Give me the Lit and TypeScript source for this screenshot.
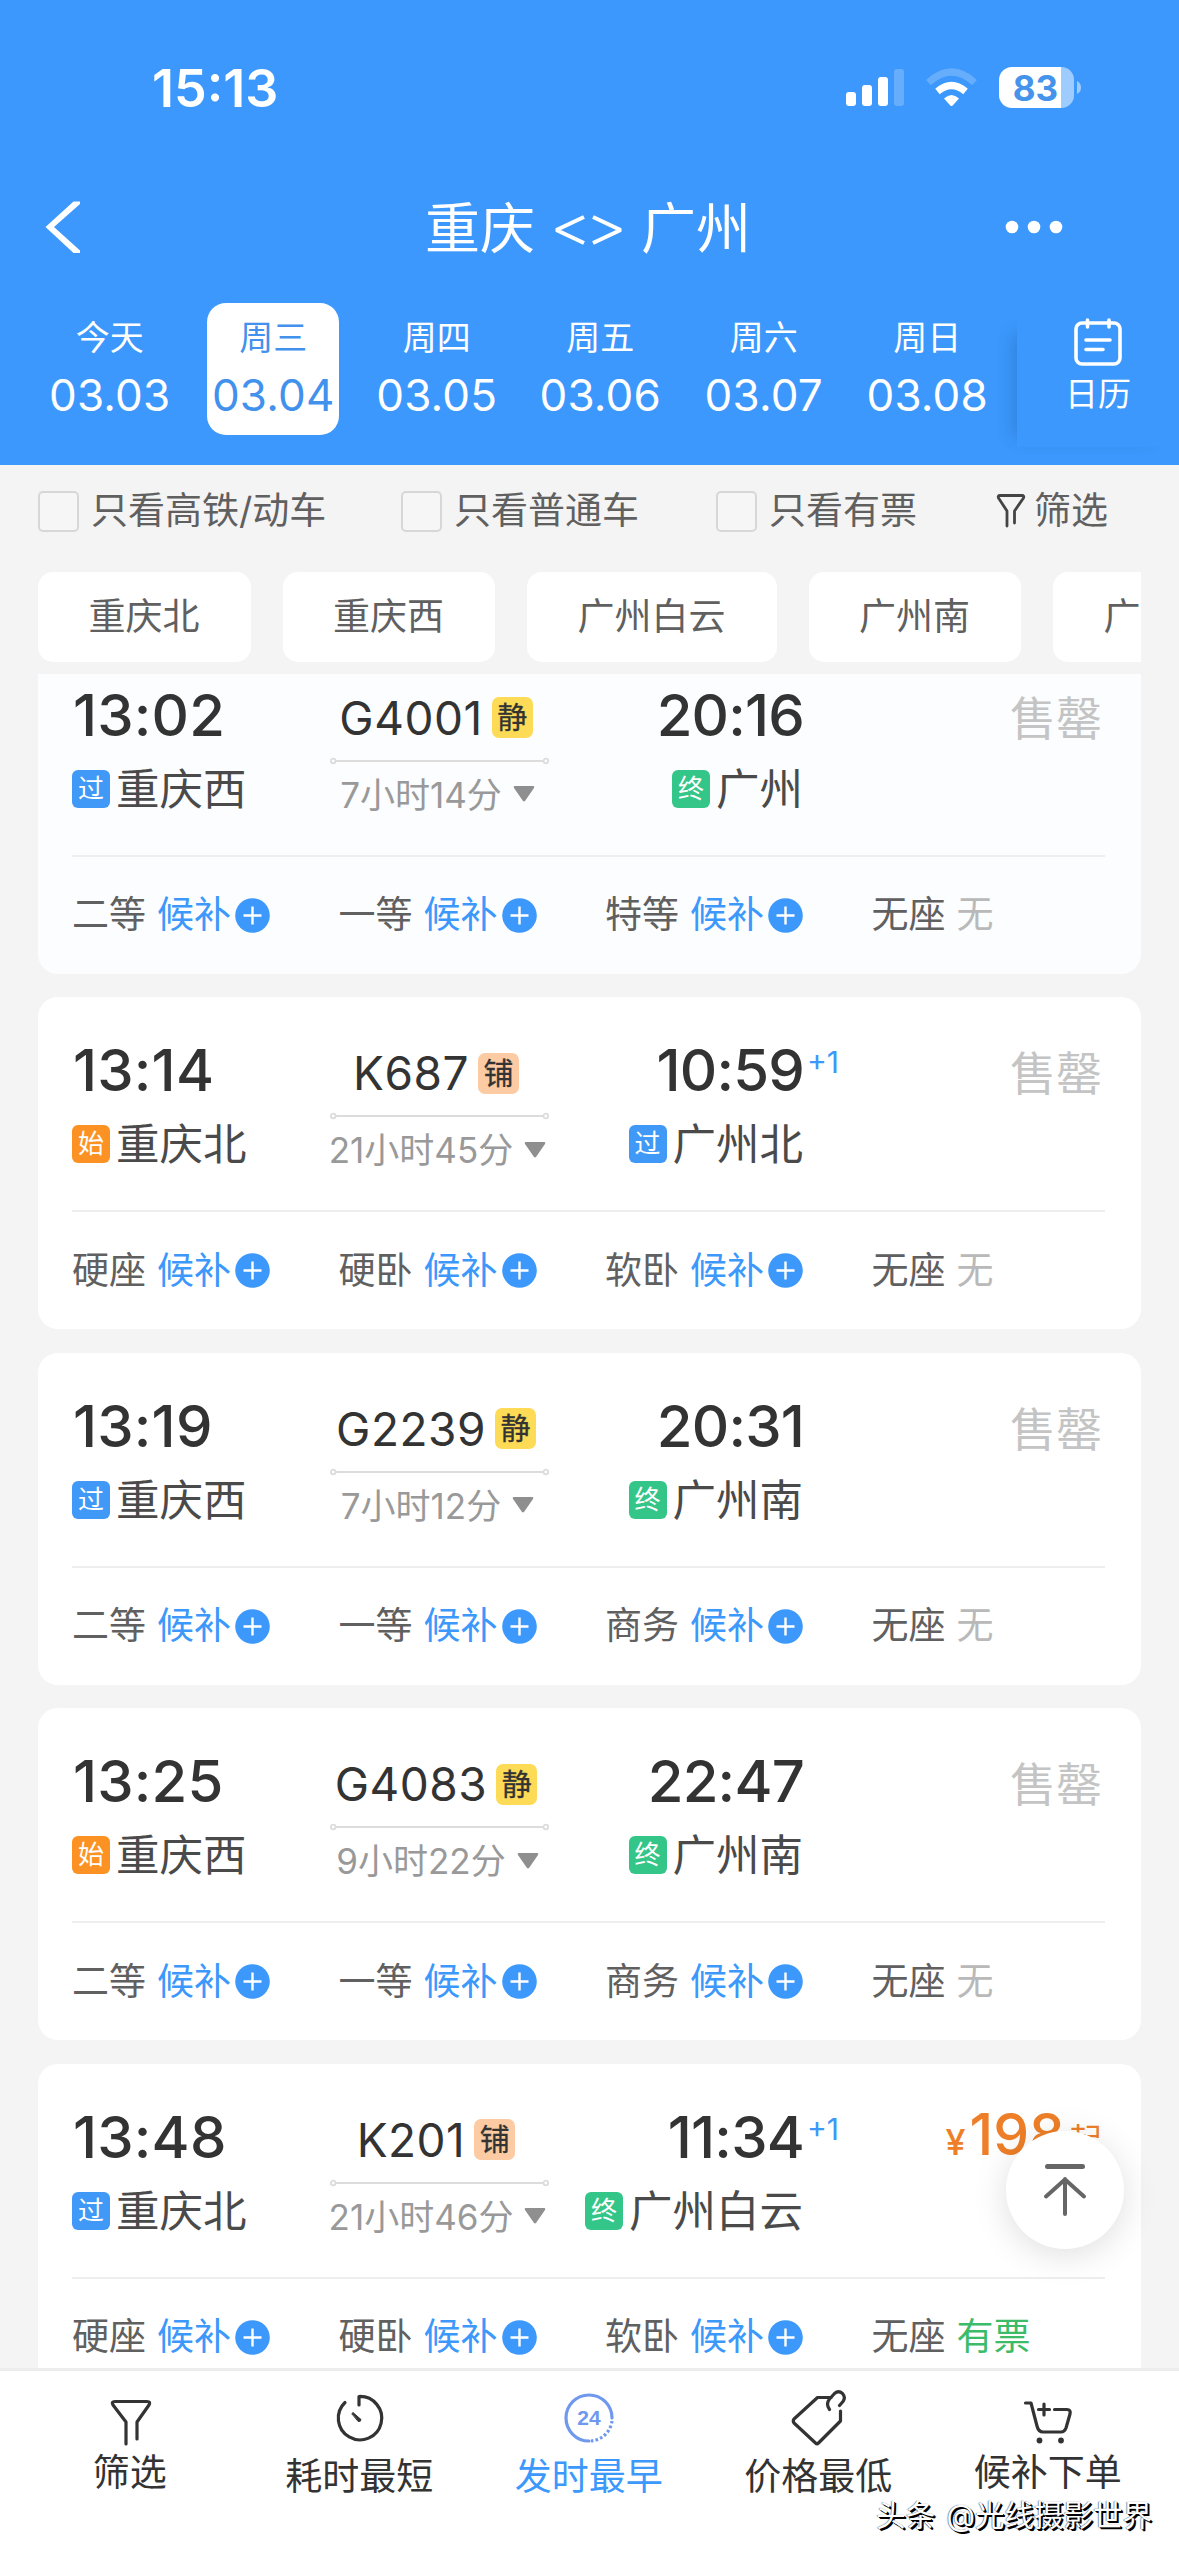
import { LitElement, html, css, svg, nothing } from "lit";
import { customElement, property } from "lit/decorators.js";
import { classMap } from "lit/directives/class-map.js";

interface Seat { name: string; state: "wait" | "none" | "ok"; }
interface Train {
  dep: string; depTag: string; from: string;
  no: string; mark: string; dur: string;
  arr: string; plus?: boolean; arrTag: string; to: string;
  price?: string; seats: Seat[];
}

const seatRow = (names: string[], last: "none" | "ok" = "none"): Seat[] =>
  names.map((name, i) => ({ name, state: i < 3 ? "wait" : last }));

const TRAINS: Train[] = [
  { dep: "13:02", depTag: "过", from: "重庆西", no: "G4001", mark: "静", dur: "7小时14分", arr: "20:16", arrTag: "终", to: "广州", seats: seatRow(["二等", "一等", "特等", "无座"]) },
  { dep: "13:14", depTag: "始", from: "重庆北", no: "K687", mark: "铺", dur: "21小时45分", arr: "10:59", plus: true, arrTag: "过", to: "广州北", seats: seatRow(["硬座", "硬卧", "软卧", "无座"]) },
  { dep: "13:19", depTag: "过", from: "重庆西", no: "G2239", mark: "静", dur: "7小时12分", arr: "20:31", arrTag: "终", to: "广州南", seats: seatRow(["二等", "一等", "商务", "无座"]) },
  { dep: "13:25", depTag: "始", from: "重庆西", no: "G4083", mark: "静", dur: "9小时22分", arr: "22:47", arrTag: "终", to: "广州南", seats: seatRow(["二等", "一等", "商务", "无座"]) },
  { dep: "13:48", depTag: "过", from: "重庆北", no: "K201", mark: "铺", dur: "21小时46分", arr: "11:34", plus: true, arrTag: "终", to: "广州白云", price: "198", seats: seatRow(["硬座", "硬卧", "软卧", "无座"], "ok") },
];

const DATES = [
  ["今天", "03.03"], ["周三", "03.04"], ["周四", "03.05"],
  ["周五", "03.06"], ["周六", "03.07"], ["周日", "03.08"],
];

const TABS = [
  {
    label: "筛选", high: true,
    icon: svg`<path d="M26 56V34L13 17Q11 13.5 15 13.5H47Q51 13.5 49 17L37 34V51"/>`,
  },
  {
    label: "耗时最短",
    icon: svg`<path d="M30 17V8.5A21.7 21.7 0 1 1 16 14.5"/><path d="M23 25.5L24 24.5L32 31.5Q32 34 29.5 33.5Z" fill="currentColor" stroke-width="1"/>`,
  },
  {
    label: "发时最早", on: true,
    icon: svg`<g stroke="#6f98ee"><path d="M30 53A23 23 0 1 1 53 30"/><path d="M53 33A23 23 0 0 1 32 53" stroke-linecap="butt" stroke-dasharray="2.6 2.2"/></g><text class="n24" x="30" y="37" text-anchor="middle">24</text>`,
  },
  {
    label: "价格最低",
    icon: svg`<path d="M43 9.500H29.500L6 31Q4.500 33 6 35L27.500 55Q29 56.500 30.500 55L52.500 33V23"/><path d="M41.500 21.500Q37.500 16 41.500 11L46.500 5.500Q50.500 2 54.500 5.500Q58 9.500 55 13.500L51.500 17.500"/>`,
  },
  {
    label: "候补下单", high: true,
    icon: svg`<path d="M7.500 15H13L19 38Q20.500 44 25 44H43Q46.500 44 48 40L52 26Q53 21.500 49 21.500H36.500"/><path d="M20.500 21.500H31.500M26 16V27"/><circle cx="21.500" cy="52.500" r="2.900" fill="currentColor" stroke="none"/><circle cx="43" cy="52.500" r="2.900" fill="currentColor" stroke="none"/>`,
  },
];

const FONT = css`Inter, "Noto Sans CJK SC", "Noto Sans", sans-serif`;

@customElement("train-card")
class TrainCard extends LitElement {
  @property({ attribute: false }) train!: Train;

  static styles = css`
    :host { display: block; height: 332px; border-radius: 20px; background: #fff; color: #333; font-family: ${FONT}; flex: none; }
    :host([dim]) { background: #fbfdfe; }
    .top { display: grid; grid-template-columns: 258px 219px 254px 1fr; height: 213px; margin: 0 36px 0 34px; border-bottom: 2px solid #eeeeef; }
    .dep, .arr { padding-top: 43px; display: flex; flex-direction: column; }
    .arr { align-items: flex-end; }
    .time { font-size: 58px; font-weight: 450; line-height: 60px; position: relative; white-space: nowrap; letter-spacing: 0.200px; padding-left: 1px; }
    .arr .time { letter-spacing: -0.800px; margin-right: -1px; }
    .day { position: absolute; left: 100%; top: 2px; margin-left: 3px; font-size: 30px; line-height: 40px; font-weight: 400; color: #3c98fb; letter-spacing: 0; }
    .station { display: flex; align-items: center; gap: 6px; margin-top: 19px; height: 50px; font-size: 43.500px; line-height: 50px; color: #4a4a4a; white-space: nowrap; }
    .tag { width: 38px; height: 38px; border-radius: 6px; font-size: 26px; line-height: 38px; text-align: center; color: #fff; }
    .pass { background: #4098f7; }
    .start { background: #fd9224; }
    .end { background: #34c588; }
    .mid { padding-top: 46px; display: flex; flex-direction: column; align-items: center; }
    .no { display: flex; align-items: center; gap: 9px; height: 60px; margin-right: 7px; font-size: 46px; letter-spacing: 0.500px; }
    .mark { width: 41px; height: 41px; border-radius: 7px; font-size: 30px; line-height: 40px; text-align: center; letter-spacing: 0; -webkit-text-stroke: 0.300px #333; }
    .quiet { background: #fddb56; }
    .berth { background: #fccba4; }
    .rule { display: block; margin-top: 9px; width: 219px; height: 8px; }
    .dur { margin-top: 10px; margin-right: 4px; display: flex; align-items: center; gap: 11px; height: 40px; font-size: 35px; line-height: 40px; color: #999; white-space: nowrap; }
    .tri { width: 22px; height: 16px; margin-top: -1px; }
    .price { padding: 46px 3px 0 0; text-align: right; font-size: 46px; line-height: 60px; color: #c4c4c4; white-space: nowrap; }
    .cash { padding-top: 41px; color: #ee7f28; font-size: 57px; font-weight: 500; }
    .yen { font-size: 36px; font-weight: 450; margin-right: 4px; }
    .from { font-size: 33px; font-weight: 400; margin-left: 4px; position: relative; top: -3px; }
    .seats { display: grid; grid-template-columns: repeat(3, 266.500px) 1fr; margin-left: 34px; height: 117px; align-items: center; font-size: 37px; line-height: 50px; color: #606060; }
    .seat { display: flex; align-items: center; gap: 11px; white-space: nowrap; }
    .wait { display: flex; align-items: center; gap: 4px; color: #3c98fb; }
    .wait svg { width: 35px; height: 35px; }
    .none { color: #b9b9b9; }
    .ok { color: #3cbb68; }
  `;

  private tag(t: string) {
    return html`<span class=${classMap({ tag: true, pass: t === "过", start: t === "始", end: t === "终" })}>${t}</span>`;
  }

  render() {
    const t = this.train;
    return html`
      <div class="top">
        <div class="dep">
          <div class="time">${t.dep}</div>
          <div class="station">${this.tag(t.depTag)}<span>${t.from}</span></div>
        </div>
        <div class="mid">
          <div class="no"><span>${t.no}</span><span class=${classMap({ mark: true, quiet: t.mark === "静", berth: t.mark === "铺" })}>${t.mark}</span></div>
          <svg class="rule" viewBox="0 0 219 8" fill="none" stroke="#dcdcdc" stroke-width="1.800"><path d="M5.500 4H213.500"/><circle cx="3.200" cy="4" r="2.300"/><circle cx="215.800" cy="4" r="2.300"/></svg>
          <div class="dur"><span>${t.dur}</span><svg class="tri" viewBox="0 0 22 17" preserveAspectRatio="none"><path d="M1.500 0H20.500Q22 0.500 21 2L12 16Q11 17 10 16L1 2Q0 0.500 1.500 0Z" fill="#8f8f8f"/></svg></div>
        </div>
        <div class="arr">
          <div class="time">${t.arr}${t.plus ? html`<span class="day">+1</span>` : nothing}</div>
          <div class="station">${this.tag(t.arrTag)}<span>${t.to}</span></div>
        </div>
        ${t.price
          ? html`<div class="price cash"><span class="yen">¥</span>${t.price}<span class="from">起</span></div>`
          : html`<div class="price">售罄</div>`}
      </div>
      <div class="seats">
        ${t.seats.map((s) => html`<div class="seat"><span>${s.name}</span>${s.state === "wait"
          ? html`<span class="wait"><span>候补</span><svg viewBox="0 0 35 35"><circle cx="17.500" cy="17.500" r="17.300" fill="#3c98fb"/><path d="M17.500 8.500V26.500M8.500 17.500H26.500" stroke="#fff" stroke-width="2.400"/></svg></span>`
          : s.state === "none" ? html`<span class="none">无</span>` : html`<span class="ok">有票</span>`}</div>`)}
      </div>`;
  }
}

@customElement("app-root")
class AppRoot extends LitElement {
  static styles = css`
    :host { display: flex; flex-direction: column; position: relative; width: 1179px; height: 2556px; overflow: hidden; background: #f4f4f4; font-family: ${FONT}; color: #333; }
    .head { flex: none; height: 465px; background: #3c98fc; color: #fff; }
    .status { height: 176px; display: flex; align-items: flex-start; justify-content: space-between; padding: 59px 98px 0 152px; box-sizing: border-box; }
    .clock { font-size: 52px; font-weight: 600; line-height: 60px; }
    .sys { display: block; width: 236px; height: 44px; margin-top: 7px; }
    .pct { font-family: ${FONT}; font-size: 35px; font-weight: 700; fill: #4593ea; }
    .nav { height: 104px; display: flex; align-items: center; justify-content: space-between; padding: 0 116px 0 44px; }
    .back { width: 37px; height: 54px; margin-top: -2px; }
    .title { display: flex; align-items: center; gap: 18.500px; font-size: 55px; line-height: 80px; margin-left: 90px; }
    .swap { width: 69px; height: 32px; margin-top: 4px; }
    .more { width: 58px; height: 14px; margin-top: -2px; }
    .days { display: flex; height: 185px; padding-left: 28px; }
    .day { width: 163.500px; display: flex; justify-content: center; padding-top: 23px; }
    .box { width: 132px; height: 132px; border-radius: 19px; display: flex; flex-direction: column; align-items: center; }
    .sel { background: #fff; color: #4291ec; }
    .wk { font-size: 34px; line-height: 40px; margin-top: 15px; }
    .dt { font-size: 44px; line-height: 50px; margin-top: 12px; letter-spacing: 0.200px; }
    .cal { flex: 1; margin: 36px 0 18px 8px; position: relative; display: flex; flex-direction: column; align-items: center; padding-top: 1px; background: #3c98fc; box-shadow: -16px 4px 16px -14px rgba(20, 70, 130, 0.320); }
    .cal svg { width: 50px; height: 50px; }
    .cal span { font-size: 33px; line-height: 40px; margin-top: 7px; }
    .filters { flex: none; height: 107px; box-sizing: border-box; padding: 25px 0 0 38px; display: grid; grid-template-columns: 363px 315px 280px 1fr; font-size: 37px; line-height: 42px; color: #606060; }
    .f { display: flex; height: 42px; align-items: center; gap: 12px; white-space: nowrap; }
    .f.last { gap: 8px; }
    .chk { width: 37px; height: 37px; border: 2px solid #d7d7d7; border-radius: 5px; background: #f6f6f6; }
    .fun { width: 30px; height: 36px; }
    .chips { flex: none; height: 90px; margin: 0 38px 12px 38px; display: flex; gap: 32px; overflow: hidden; }
    .chip { flex: none; padding: 0 51px 0 50.500px; border-radius: 15px; background: #fff; font-size: 37px; line-height: 90px; color: #606060; }
    .list { flex: 1; min-height: 0; overflow: hidden; padding: 0 38px; display: flex; flex-direction: column; gap: 23.500px; }
    .list train-card:first-child { margin-top: -32.500px; }
    .tabs { flex: none; height: 188px; box-sizing: border-box; border-top: 3px solid #ececec; background: #fff; display: grid; grid-template-columns: repeat(5, 229.500px); padding: 17px 15px 0; }
    .tab { display: flex; flex-direction: column; align-items: center; font-size: 37px; line-height: 40px; color: #333; }
    .tab svg { width: 60px; height: 60px; fill: none; stroke: currentColor; stroke-width: 3.200; stroke-linecap: round; stroke-linejoin: round; margin-bottom: 9px; }
    .tab.high svg { margin-bottom: 5px; }
    .tab.on { color: #3c98fb; }
    .n24 { font-family: "Liberation Sans", sans-serif; font-size: 21px; font-weight: 700; fill: #6f98ee; stroke: none; }
    .totop { position: absolute; left: 1006px; top: 2131px; width: 118px; height: 118px; border-radius: 50%; background: #fff; box-shadow: 0 6px 34px rgba(0, 0, 0, 0.130); }
    .totop svg { width: 118px; height: 118px; }
    .mark { position: absolute; right: 27px; bottom: 21px; font-size: 29.500px; line-height: 40px; word-spacing: 3px; color: #fff; text-shadow: 2px 2px 0 #000, 1px 1px 0 #000, -0.500px 0 1px #555; white-space: nowrap; }
  `;

  render() {
    return html`
      <div class="head">
        <div class="status">
          <div class="clock">15:13</div>
          <svg class="sys" viewBox="845 66 236 44">
            <g fill="#fff">
              <rect x="846" y="92" width="10" height="14" rx="3"/><rect x="862" y="85" width="10" height="21" rx="3"/>
              <rect x="878" y="77" width="10" height="29" rx="3"/><rect x="894" y="69" width="10" height="37" rx="3" opacity="0.220"/>
              <path d="M944 98.500Q951.500 91.500 959 98.500L952.700 105.500Q951.500 106.500 950.300 105.500Z"/>
            </g>
            <path d="M937.500 91.500Q951.500 79.500 965.500 91.500" fill="none" stroke="#fff" stroke-width="7"/>
            <path d="M928.500 82.500Q951.500 61.500 974.500 82.500" fill="none" stroke="#fff" stroke-width="7" opacity="0.220"/>
            <path d="M1061 67H1061.500A12.500 12.500 0 0 1 1074 79.500V95.500A12.500 12.500 0 0 1 1061.500 108H1061Z" fill="#fff" opacity="0.500"/>
            <path d="M1012 67H1061V108H1012A13 13 0 0 1 999 95V80A13 13 0 0 1 1012 67Z" fill="#fff"/>
            <path d="M1077 81Q1081 83 1081 87.500Q1081 92 1077 94Z" fill="#fff" opacity="0.500"/>
            <text class="pct" x="1035.500" y="100.500" text-anchor="middle">83</text>
          </svg>
        </div>
        <div class="nav">
          <svg class="back" viewBox="44 200 37 54"><path d="M80 201.500H73.500L45.500 227L73.500 253H80V250.500L54 227L80 204Z" fill="#fff"/></svg>
          <div class="title"><span>重庆</span><svg class="swap" viewBox="0 0 69 32" fill="none" stroke="#fff" stroke-width="4"><path d="M30 3L3.500 15.500V16.500L30 29M39 3L65.500 15.500V16.500L39 29"/></svg><span>广州</span></div>
          <svg class="more" viewBox="0 0 58 14" fill="#fff"><circle cx="7" cy="7" r="6.300"/><circle cx="29" cy="7" r="6.300"/><circle cx="51" cy="7" r="6.300"/></svg>
        </div>
        <div class="days">
          ${DATES.map(([w, d], i) => html`<div class="day"><div class=${classMap({ box: true, sel: i === 1 })}><span class="wk">${w}</span><span class="dt">${d}</span></div></div>`)}
          <div class="cal">
            <svg viewBox="0 0 50 50" fill="none" stroke="#fff" stroke-width="3.600" stroke-linecap="round"><rect x="3" y="6" width="44" height="41" rx="6"/><path d="M14.500 3V10M36 3V10M13 23H37M13 32.500H30"/></svg>
            <span>日历</span>
          </div>
        </div>
      </div>
      <div class="filters">
        <div class="f"><i class="chk"></i><span>只看高铁/动车</span></div>
        <div class="f"><i class="chk"></i><span>只看普通车</span></div>
        <div class="f"><i class="chk"></i><span>只看有票</span></div>
        <div class="f last"><svg class="fun" viewBox="0 0 30 36" fill="none" stroke="#444" stroke-width="2.800" stroke-linecap="round" stroke-linejoin="round"><path d="M11 33V18L2.500 5Q1.500 2.500 4 2.500H26Q28.500 2.500 27.500 5L18.500 18V30"/></svg><span>筛选</span></div>
      </div>
      <div class="chips">${["重庆北", "重庆西", "广州白云", "广州南", "广州北"].map((c) => html`<div class="chip">${c}</div>`)}</div>
      <div class="list">${TRAINS.map((t, i) => html`<train-card .train=${t} ?dim=${i === 0}></train-card>`)}</div>
      <div class="tabs">
        ${TABS.map((t) => html`<div class=${classMap({ tab: true, on: !!t.on, high: !!t.high })}><svg viewBox="0 0 60 60">${t.icon}</svg><span>${t.label}</span></div>`)}
      </div>
      <div class="totop"><svg viewBox="0 0 118 118" fill="none" stroke="#666" stroke-width="4" stroke-linecap="round"><path d="M41.500 35.500H76.500" stroke-width="5"/><path d="M59 83V48M40 65.500L59 48.500L78 65.500"/></svg></div>
      <div class="mark">头条 @光线摄影世界</div>`;
  }
}
